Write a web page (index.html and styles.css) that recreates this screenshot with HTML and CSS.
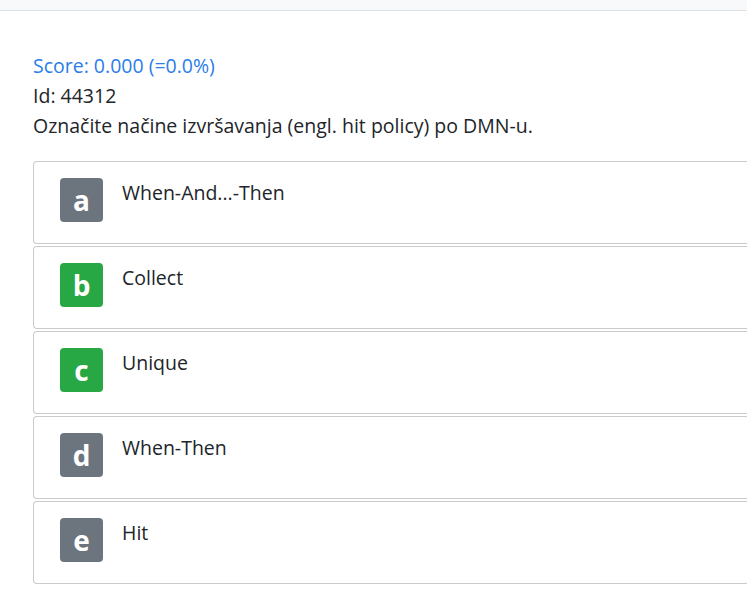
FILE: index.html
```html
<!DOCTYPE html>
<html lang="hr">
<head>
<meta charset="utf-8">
<title>Question</title>
<link rel="stylesheet" href="styles.css">
</head>
<body>
<div class="topbar"></div>
<main class="content">
  <div class="score">Score: 0.000 (=0.0%)</div>
  <div class="line">Id: 44312</div>
  <div class="line">Označite načine izvršavanja (engl. hit policy) po DMN-u.</div>
  <div class="answers">
    <div class="answer"><span class="badge gray">a</span><span class="label">When-And...-Then</span></div>
    <div class="answer"><span class="badge green">b</span><span class="label">Collect</span></div>
    <div class="answer"><span class="badge green">c</span><span class="label">Unique</span></div>
    <div class="answer"><span class="badge gray">d</span><span class="label">When-Then</span></div>
    <div class="answer"><span class="badge gray">e</span><span class="label">Hit</span></div>
  </div>
</main>
</body>
</html>
```
FILE: styles.css
```css
html, body {
  margin: 0;
  padding: 0;
  background: #fff;
}
body {
  font-family: "Open Sans", "Noto Sans", sans-serif;
  font-size: 19.5px;
  line-height: 30px;
  color: #212529;
}
.topbar {
  height: 10px;
  background: #f8f9fa;
  border-bottom: 1px solid #dee2e6;
}
.content {
  padding: 40px 0 0 33px;
}
.score {
  color: #2b7de9;
}
.answers {
  margin-top: 20px;
  display: flex;
  flex-direction: column;
  gap: 2px;
}
.answer {
  display: flex;
  align-items: flex-start;
  gap: 19px;
  border: 1px solid #cacaca;
  border-right: none;
  border-radius: 4px 0 0 4px;
  padding: 16px 26px 21px 26px;
}
.badge {
  flex: none;
  width: 43px;
  height: 44px;
  border-radius: 4px;
  color: #fff;
  font-weight: 700;
  font-size: 28px;
  line-height: 44px;
  text-align: center;
}
.badge.gray { background: #6c757d; }
.badge.green { background: #28a745; }
.label {
  line-height: 30px;
}
```
